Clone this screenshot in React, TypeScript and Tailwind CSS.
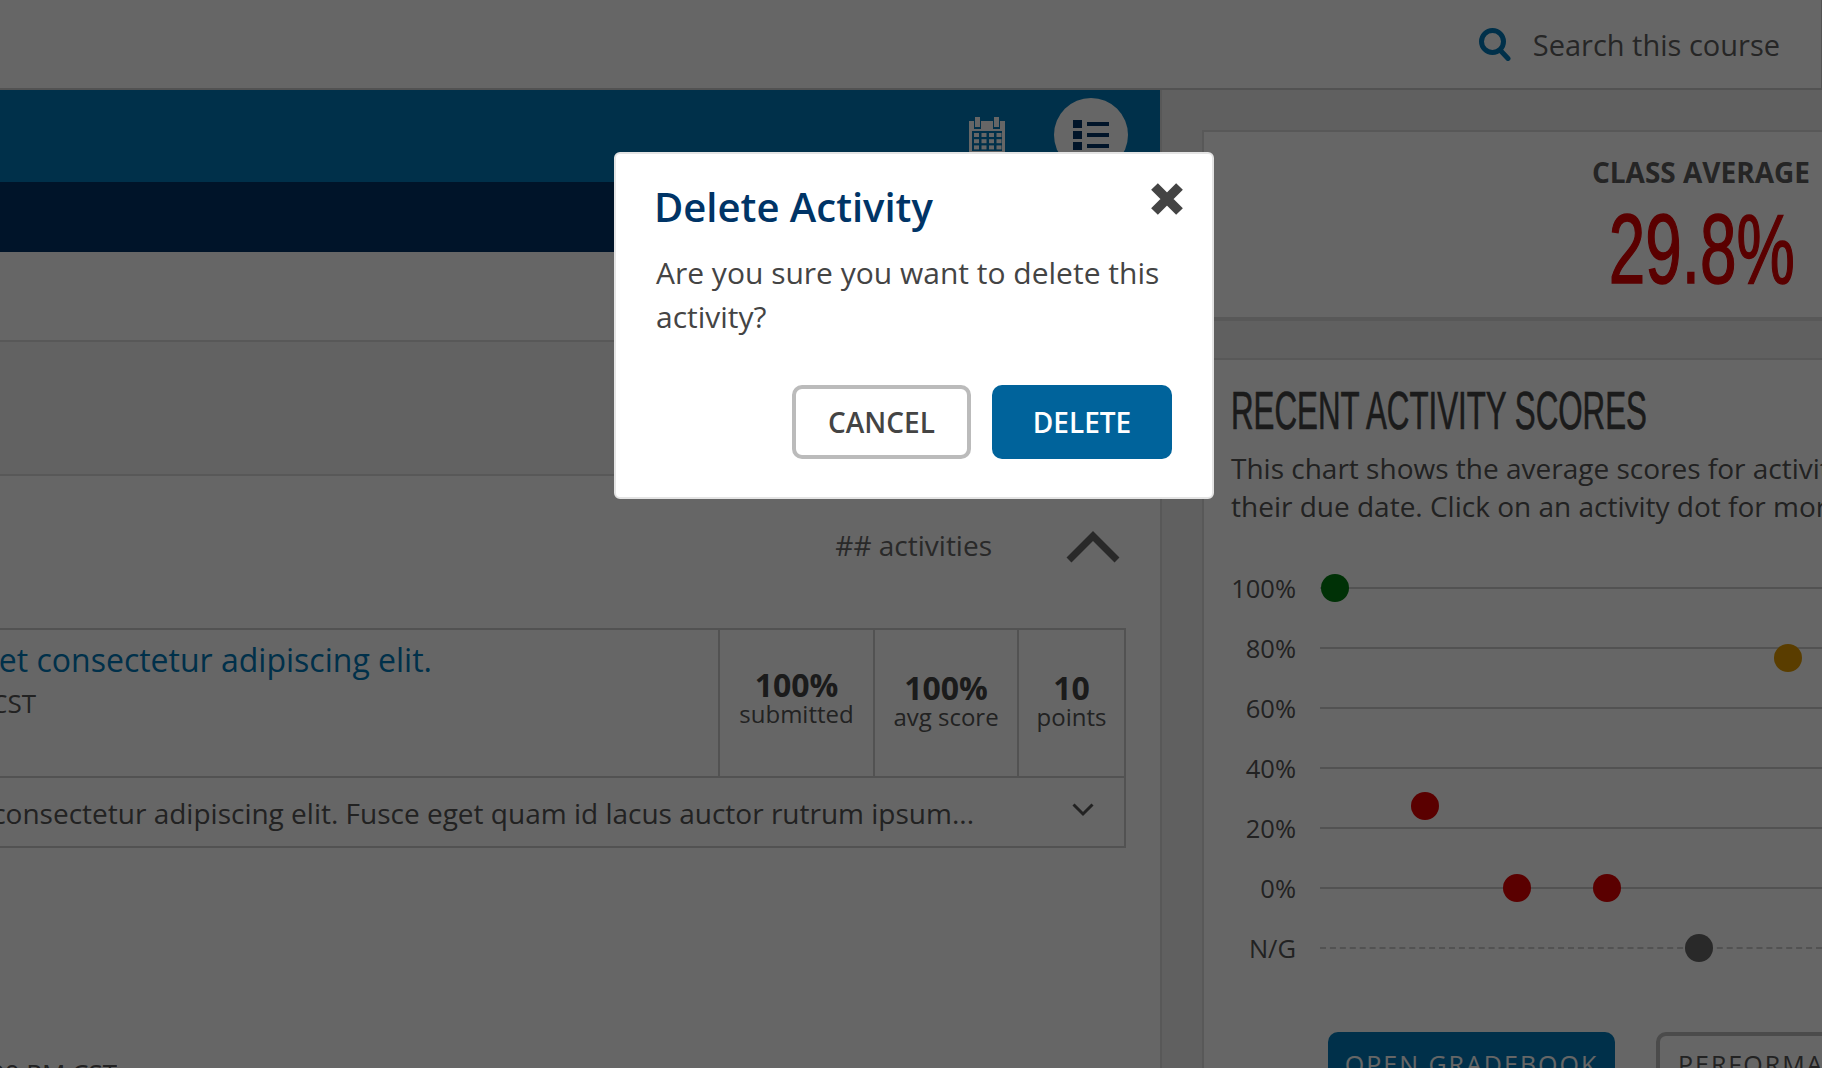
import React from 'react';

const rows = ['100%', '80%', '60%', '40%', '20%', '0%', 'N/G'];

const dots = [
    { left: 15, top: 0, color: 'bg-[#007a0f]' },
    { left: 468, top: 70, color: 'bg-[#e09a00]' },
    { left: 105, top: 218, color: 'bg-[#e00000]' },
    { left: 197, top: 300, color: 'bg-[#e00000]' },
    { left: 287, top: 300, color: 'bg-[#e00000]' },
    { left: 379, top: 360, color: 'bg-[#666666]' },
];

function SearchIcon() {
    return (
        <svg width="32" height="33" viewBox="0 0 32 33" fill="none" className="mr-[22px] text-[#0079b8]">
            <circle cx="13.5" cy="13.5" r="11" stroke="currentColor" strokeWidth="5" />
            <path d="M21 22L29 30.5" stroke="currentColor" strokeWidth="5" strokeLinecap="round" />
        </svg>
    );
}

function CalendarIcon() {
    const cells = [];
    for (let r = 0; r < 3; r++) {
        for (let c = 0; c < 4; c++) {
            cells.push(<rect key={`${r}-${c}`} x={5 + c * 7.5} y={16 + r * 6.2} width="5" height="4" fill="#fff" />);
        }
    }
    return (
        <svg width="36" height="36" viewBox="0 0 36 36" className="mr-[49px]">
            <rect x="0" y="4" width="36" height="32" fill="#fff" />
            <rect x="3" y="14" width="30" height="20" fill="#0079b8" />
            {cells}
            <rect x="5" y="2" width="7" height="10" fill="#0079b8" />
            <rect x="24" y="2" width="7" height="10" fill="#0079b8" />
            <rect x="6" y="0" width="5" height="10" fill="#fff" />
            <rect x="25" y="0" width="5" height="10" fill="#fff" />
        </svg>
    );
}

function ListIcon() {
    return (
        <svg width="36" height="30" viewBox="0 0 36 30" fill="#003466">
            <rect x="0" y="0" width="9" height="8" />
            <rect x="0" y="11" width="9" height="8" />
            <rect x="0" y="22" width="9" height="8" />
            <rect x="14" y="2" width="22" height="4" />
            <rect x="14" y="13" width="22" height="4" />
            <rect x="14" y="24" width="22" height="4" />
        </svg>
    );
}

function Stat({ value, label, className }: { value: string; label: string; className: string }) {
    return (
        <div className={`flex flex-col items-center border-l-2 border-[#ccc] ${className}`}>
            <span className="text-[32px] leading-[30px] font-bold text-[#444]">{value}</span>
            <span className="text-[24px] leading-[28px] text-[#555]">{label}</span>
        </div>
    );
}

function ActivityPanel() {
    return (
        <div className="w-[1160px] shrink-0 bg-white">
            <div className="flex h-[92px] items-center justify-end bg-[#0079b8] pr-[32px] pb-[2px]">
                <CalendarIcon />
                <div className="flex h-[74px] w-[74px] items-center justify-center rounded-full bg-white">
                    <ListIcon />
                </div>
            </div>
            <div className="h-[70px] bg-[#003466]" />
            <div className="h-[90px] border-b-2 border-[#ddd] bg-white" />
            <div className="h-[134px] border-b-2 border-[#ddd] bg-[#f4f4f4]" />

            <div className="flex h-[152px] items-start justify-end pt-[47px] pr-[40px]">
                <span className="text-[28px] leading-[44px] text-[#666]">## activities</span>
                <svg width="54" height="32" viewBox="0 0 54 32" fill="none" className="mt-[8px] ml-[74px] text-[#666]">
                    <path d="M3 29L27 5L51 29" stroke="currentColor" strokeWidth="7" />
                </svg>
            </div>

            <div className="mr-[34px] border-y-2 border-r-2 border-[#ccc]">
                <div className="flex h-[146px]">
                    <div className="flex-1 overflow-hidden pt-[8px]">
                        <div className="flex w-[432px] justify-end whitespace-nowrap text-[32px] leading-[44px] text-[#0079b8]">
                            Lorem ipsum dolor sit amet consectetur adipiscing elit.
                        </div>
                        <div className="-mt-[1px] flex w-[36px] justify-end whitespace-nowrap text-[26px] leading-[44px] text-[#555]">
                            Due: 01/15/2024 11:59 PM CST
                        </div>
                    </div>
                    <Stat value="100%" label="submitted" className="w-[155px] pt-[40px]" />
                    <Stat value="100%" label="avg score" className="w-[144px] pt-[43px]" />
                    <Stat value="10" label="points" className="w-[107px] pt-[43px]" />
                </div>
                <div className="flex h-[70px] items-center justify-between border-t-2 border-[#ccc] pr-[30px]">
                    <div className="flex w-[974px] justify-end overflow-hidden pt-[2px] whitespace-nowrap text-[28px] leading-[44px] text-[#555]">
                        Lorem ipsum dolor sit amet consectetur adipiscing elit. Fusce eget quam id lacus auctor rutrum ipsum...
                    </div>
                    <svg width="22" height="14" viewBox="0 0 22 14" fill="none" className="mb-[4px] text-[#555]">
                        <path d="M1.5 1.5L11 11L20.5 1.5" stroke="currentColor" strokeWidth="3" />
                    </svg>
                </div>
            </div>

            <div className="mt-[205px] flex w-[117px] justify-end overflow-hidden whitespace-nowrap text-[26px] leading-[40px] text-[#555]">
                Available: 01/01/2024 12:00 PM CST
            </div>
        </div>
    );
}

function ScoresPanel() {
    return (
        <div className="min-w-0 flex-1 overflow-hidden border-l-2 border-[#ddd] bg-[#f0f0f0] pt-[40px] pl-[40px]">
            <div className="flex h-[191px] flex-col items-end border-t-2 border-b-4 border-l-2 border-[#ddd] bg-white pt-[20px] pr-[12px]">
                <div className="text-[28px] leading-[40px] font-bold text-[#5c5c5c]">CLASS AVERAGE</div>
                <div className="mt-[7px] mr-[15px] origin-right scale-x-[.67] font-['Liberation_Sans',sans-serif] text-[98px] leading-[100px] whitespace-nowrap text-[#e00000] [-webkit-text-stroke:1.5px_#e00000]">
                    29.8%
                </div>
            </div>
            <div className="mt-[37px] h-[720px] border-t-2 border-l-2 border-[#ddd] bg-white pt-[19px] pl-[27px]">
                <div className="origin-left scale-x-[.59] font-['Liberation_Sans',sans-serif] text-[53px] leading-[64px] whitespace-nowrap text-[#444] [-webkit-text-stroke:0.7px_#444]">
                    RECENT ACTIVITY SCORES
                </div>
                <p className="mt-[6px] text-[28px] leading-[38px] whitespace-nowrap text-[#555]">
                    This chart shows the average scores for activities past
                    <br />
                    their due date. Click on an activity dot for more details
                </p>

                <div className="relative mt-[46px] ml-[-27px]">
                    {rows.map((r) => (
                        <div key={r} className="flex h-[60px] items-start">
                            <span className="w-[92px] text-right text-[25.5px] leading-[34px] text-[#555]">{r}</span>
                            <div
                                className={`mt-[16px] ml-[24px] flex-1 border-t-2 ${r === 'N/G' ? 'border-dashed' : 'border-solid'} border-[#ccc]`}
                            />
                        </div>
                    ))}
                    {dots.map((d, i) => (
                        <div
                            key={i}
                            className={`absolute h-[28px] w-[28px] rounded-full ${d.color}`}
                            style={{ left: 102 + d.left, top: 3 + d.top }}
                        />
                    ))}
                </div>

                <div className="mt-[41px] ml-[97px] flex gap-[41px] text-[25px] tracking-[2px]">
                    <div className="flex h-[60px] w-[287px] shrink-0 items-start justify-center rounded-t-[10px] bg-[#0079b8] pt-[14px] whitespace-nowrap text-white">
                        OPEN GRADEBOOK
                    </div>
                    <div className="flex h-[60px] w-[287px] shrink-0 items-start justify-start rounded-t-[10px] border-4 border-[#bbb] bg-white pt-[10px] pl-[18px] whitespace-nowrap text-[#555]">
                        PERFORMANCE
                    </div>
                </div>
            </div>
        </div>
    );
}

function DeleteModal() {
    return (
        <div className="absolute top-[152px] left-[614px] w-[600px] rounded-[6px] border-2 border-[#e4e4e4] bg-white px-[40px] pt-[28px] pb-[38px]">
            <button className="absolute top-[28px] right-[28px] text-[#444]">
                <svg width="34" height="34" viewBox="0 0 34 34" fill="none" className="block">
                    <path d="M4.5 4.5L29.5 29.5M29.5 4.5L4.5 29.5" stroke="currentColor" strokeWidth="9.5" />
                </svg>
            </button>
            <h2 className="-ml-[2px] text-[40px] leading-[50px] font-semibold text-[#003466]">Delete Activity</h2>
            <p className="mt-[19px] text-[30px] leading-[44px] text-[#444]">
                Are you sure you want to delete this activity?
            </p>
            <div className="mt-[46px] flex justify-end gap-[21px]">
                <button className="h-[74px] w-[179px] rounded-[10px] border-4 border-[#bbb] bg-white text-[28px] font-semibold text-[#444]">
                    CANCEL
                </button>
                <button className="h-[74px] w-[180px] rounded-[10px] bg-[#00639b] text-[28px] font-semibold text-white">
                    DELETE
                </button>
            </div>
        </div>
    );
}

export default function App() {
    return (
        <div className="relative h-[1068px] w-[1822px] overflow-hidden bg-white font-['Open_Sans',sans-serif]">
            <div className="flex h-[90px] items-center justify-end border-r border-b-2 border-[#ccc] pr-[41px]">
                <SearchIcon />
                <span className="pt-[2px] text-[29px] text-[#5f5f5f]">Search this course</span>
            </div>
            <div className="flex">
                <ActivityPanel />
                <ScoresPanel />
            </div>
            <div className="absolute inset-0 bg-black/60" />
            <DeleteModal />
        </div>
    );
}
